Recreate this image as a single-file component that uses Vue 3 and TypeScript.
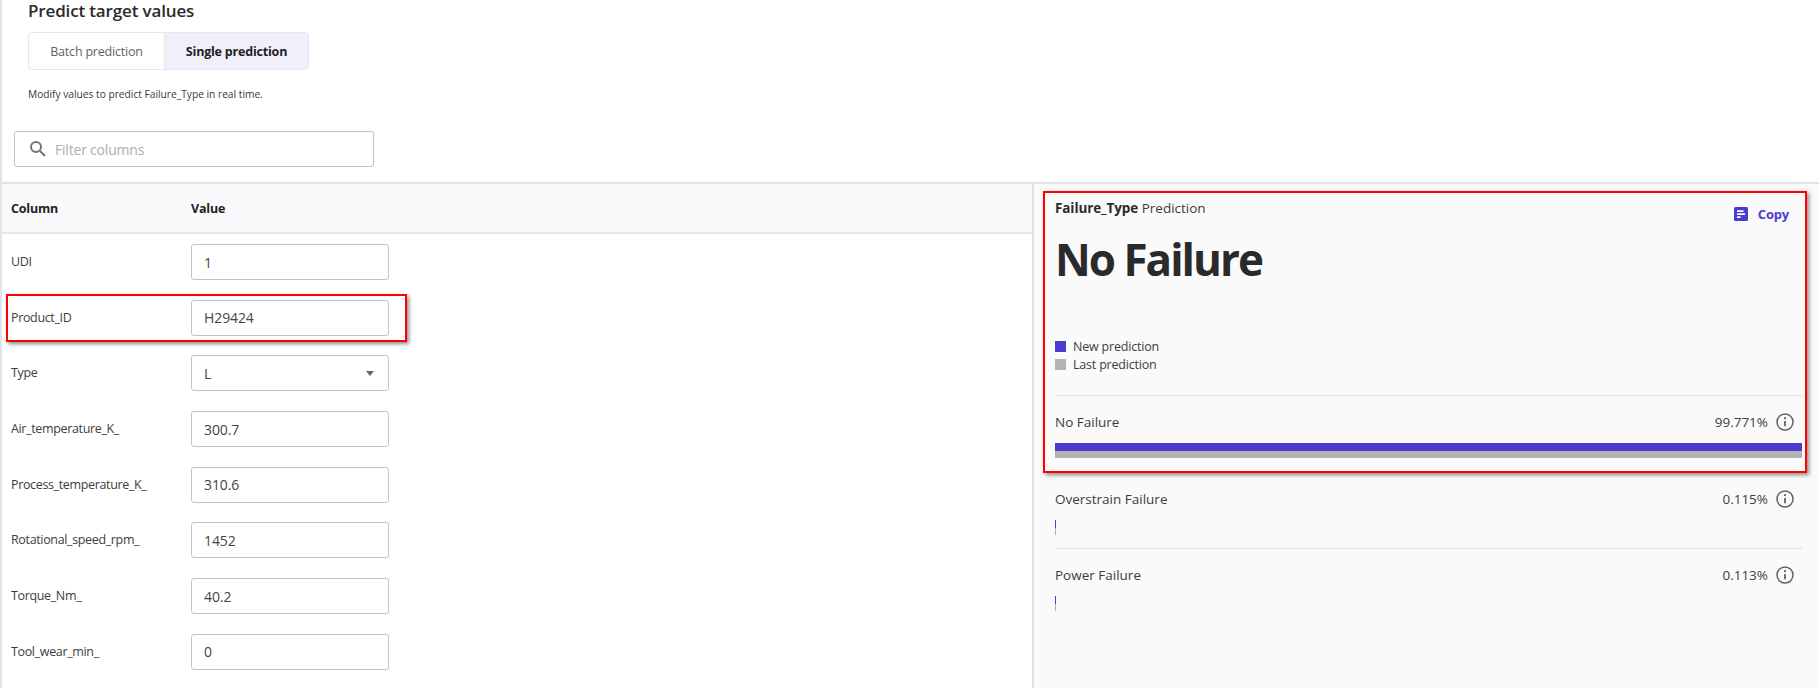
<script setup lang="ts">
interface Row { label: string; value: string; select?: boolean }
interface Pred { name: string; pct: string; main?: boolean; ruled?: boolean }

const rows: Row[] = [
  { label: 'UDI', value: '1' },
  { label: 'Product_ID', value: 'H29424' },
  { label: 'Type', value: 'L', select: true },
  { label: 'Air_temperature_K_', value: '300.7' },
  { label: 'Process_temperature_K_', value: '310.6' },
  { label: 'Rotational_speed_rpm_', value: '1452' },
  { label: 'Torque_Nm_', value: '40.2' },
  { label: 'Tool_wear_min_', value: '0' },
]
const results: Pred[] = [
  { name: 'No Failure', pct: '99.771%', main: true, ruled: true },
  { name: 'Overstrain Failure', pct: '0.115%' },
  { name: 'Power Failure', pct: '0.113%', ruled: true },
]
</script>

<template>
  <div class="page">
    <header class="head">
      <h1 class="title">Predict target values</h1>
      <div class="tabs">
        <div class="tab">Batch prediction</div>
        <div class="tab active">Single prediction</div>
      </div>
      <p class="hint">Modify values to predict Failure_Type in real time.</p>
    </header>

    <div class="filter-wrap">
      <div class="filter">
        <svg width="18" height="18" viewBox="0 0 18 18" fill="none" stroke="#757575" stroke-width="2">
          <circle cx="7" cy="7" r="5" />
          <path d="M10.8 10.8 16 16" />
        </svg>
        <span>Filter columns</span>
      </div>
    </div>

    <main class="split">
      <section class="table">
        <div class="thead">
          <div class="c1">Column</div>
          <div>Value</div>
        </div>
        <div class="tbody">
          <div v-for="r in rows" :key="r.label" class="row">
            <div class="c1 lbl">{{ r.label }}</div>
            <div class="field">
              <span>{{ r.value }}</span>
              <i v-if="r.select" class="caret"></i>
            </div>
          </div>
        </div>
      </section>

      <aside class="panel">
        <div class="pred-head">
          <div class="pred-title"><b>Failure_Type</b> Prediction</div>
          <div class="copy">
            <svg width="14" height="14" viewBox="0 0 14 14">
              <rect width="14" height="14" rx="1.5" fill="#4c3bcf" />
              <path d="M3 3.2h6.5v1.8H3zM3 6.2h8v1.8H3zM3 9.2h3.5v1.8H3z" fill="#fff" />
            </svg>
            <span>Copy</span>
          </div>
        </div>
        <div class="big">No Failure</div>
        <div class="legend">
          <div class="leg"><i class="sq new"></i>New prediction</div>
          <div class="leg"><i class="sq last"></i>Last prediction</div>
        </div>

        <div class="results">
          <div v-for="o in results" :key="o.name" class="result" :class="{ ruled: o.ruled }">
            <div class="res-line">
              <span>{{ o.name }}</span>
              <span class="pct">{{ o.pct }}
                <svg class="info" width="18" height="18" viewBox="0 0 18 18" fill="none" stroke="#616161" stroke-width="1.5">
                  <circle cx="9" cy="9" r="8" />
                  <path d="M9 8v5.2" stroke-width="1.8" />
                  <circle cx="9" cy="5.2" r="1.1" fill="#616161" stroke="none" />
                </svg>
              </span>
            </div>
            <div class="bars" :class="{ tiny: !o.main }">
              <div class="new-bar"></div>
              <div class="last-bar"></div>
            </div>
          </div>
        </div>
      </aside>
    </main>

    <div class="mark mark-a"></div>
    <div class="mark mark-b"></div>
  </div>
</template>

<style>
html, body { margin: 0; background: #fff; overflow: hidden; }
</style>

<style scoped>
.page {
  position: relative;
  width: 1819px;
  height: 688px;
  overflow: hidden;
  box-sizing: border-box;
  border-left: 2px solid #e3e3e3;
  font-family: "Open Sans", "Noto Sans", sans-serif;
  color: #2b2b2b;
  font-size: 13px;
  background: #fff;
}
.head { padding-left: 26px; }
.title {
  margin: 0;
  font-size: 17px;
  line-height: 22px;
  font-weight: 600;
  letter-spacing: -0.15px;
}
.tabs {
  display: flex;
  width: 281px;
  height: 38px;
  margin-top: 10px;
  box-sizing: border-box;
  border: 1px solid #e6e6ee;
  border-radius: 4px;
  overflow: hidden;
}
.tab {
  width: 135px;
  display: flex;
  align-items: center;
  justify-content: center;
  color: #62626a;
  font-size: 12.5px;
  letter-spacing: -0.2px;
}
.tab.active {
  flex: 1;
  background: #f1f0fa;
  border-left: 1px solid #e6e6ee;
  color: #222;
  font-weight: 700;
}
.hint {
  margin: 16px 0 0;
  font-size: 10.2px;
  line-height: 16px;
  color: #3a3a3a;
}
.filter-wrap { padding: 29px 0 0 12px; }
.filter {
  width: 360px;
  height: 36px;
  box-sizing: border-box;
  border: 1px solid #c4c4c4;
  border-radius: 3px;
  display: flex;
  align-items: center;
  padding-left: 14px;
  gap: 8px;
  color: #adadad;
  font-size: 14px;
  letter-spacing: -0.2px;
}
.split {
  display: flex;
  margin-top: 15px;
  border-top: 2px solid #e3e3e3;
  height: 506px;
}
.table { width: 1030px; flex: none; }
.thead {
  display: flex;
  align-items: center;
  height: 50px;
  box-sizing: border-box;
  background: #f9f9fb;
  border-bottom: 2px solid #e6e6e6;
  font-weight: 700;
  font-size: 12.5px;
  letter-spacing: -0.2px;
  color: #222;
}
.c1 { width: 189px; padding-left: 9px; flex: none; box-sizing: border-box; }
.tbody { padding-top: 10px; }
.row {
  display: flex;
  align-items: center;
  height: 36px;
  margin-bottom: 19.7px;
}
.lbl { font-size: 12.5px; color: #3d3d3d; line-height: 18px; letter-spacing: -0.35px; }
.field {
  width: 198px;
  height: 36px;
  box-sizing: border-box;
  border: 1px solid #c4c4c4;
  border-radius: 3px;
  padding: 0 12px;
  display: flex;
  align-items: center;
  justify-content: space-between;
  font-size: 14px;
  letter-spacing: -0.1px;
  color: #444;
}
.caret {
  width: 0;
  height: 0;
  margin-right: 2px;
  border-left: 4.5px solid transparent;
  border-right: 4.5px solid transparent;
  border-top: 5px solid #666;
}
.panel {
  flex: 1;
  background: #fafafa;
  border-left: 2px solid #e3e3e3;
  padding: 15px 17px 0 21px;
}
.pred-head { display: flex; justify-content: space-between; height: 22px; }
.pred-title { font-size: 13.5px; line-height: 18px; color: #3a3a3a; }
.pred-title b { font-weight: 700; color: #2a2a2a; letter-spacing: -0.1px; }
.copy {
  display: flex;
  align-items: center;
  gap: 10px;
  height: 18px;
  margin-top: 6px;
  margin-right: 13px;
  color: #4c3bcf;
  font-size: 13px;
  font-weight: 700;
  letter-spacing: -0.2px;
}
.big {
  margin-top: 10px;
  font-size: 44px;
  line-height: 56px;
  font-weight: 700;
  color: #2a2a2a;
  letter-spacing: -2px;
}
.legend { margin-top: 50.5px; }
.leg {
  display: flex;
  align-items: center;
  gap: 7px;
  height: 18px;
  font-size: 12.5px;
  letter-spacing: -0.2px;
  color: #3d3d3d;
}
.sq { width: 11px; height: 11px; flex: none; }
.sq.new { background: #4c3bcf; }
.sq.last { background: #b3b3b3; }
.results { margin-top: 21.5px; }
.result {
  height: 76.6px;
  box-sizing: border-box;
  border-top: 1px solid transparent;
  padding-top: 13px;
}
.result.ruled { border-top-color: #e0e0e0; }
.res-line {
  display: flex;
  justify-content: space-between;
  align-items: center;
  height: 26px;
  font-size: 13.5px;
  color: #3d3d3d;
}
.pct { display: flex; align-items: center; gap: 8px; margin-right: 8px; }
.bars { margin-top: 8px; }
.new-bar { height: 8px; background: #4c3bcf; }
.last-bar { height: 7px; background: #b3b3b3; }
.bars.tiny { width: 1px; }
.mark {
  position: absolute;
  box-sizing: border-box;
  border: 2px solid #f00;
  box-shadow: 2px 2px 4px rgba(0, 0, 0, 0.45);
  pointer-events: none;
}
.mark-a { left: 4px; top: 294px; width: 401px; height: 48px; }
.mark-b { left: 1041px; top: 191px; width: 764px; height: 282px; }
</style>
